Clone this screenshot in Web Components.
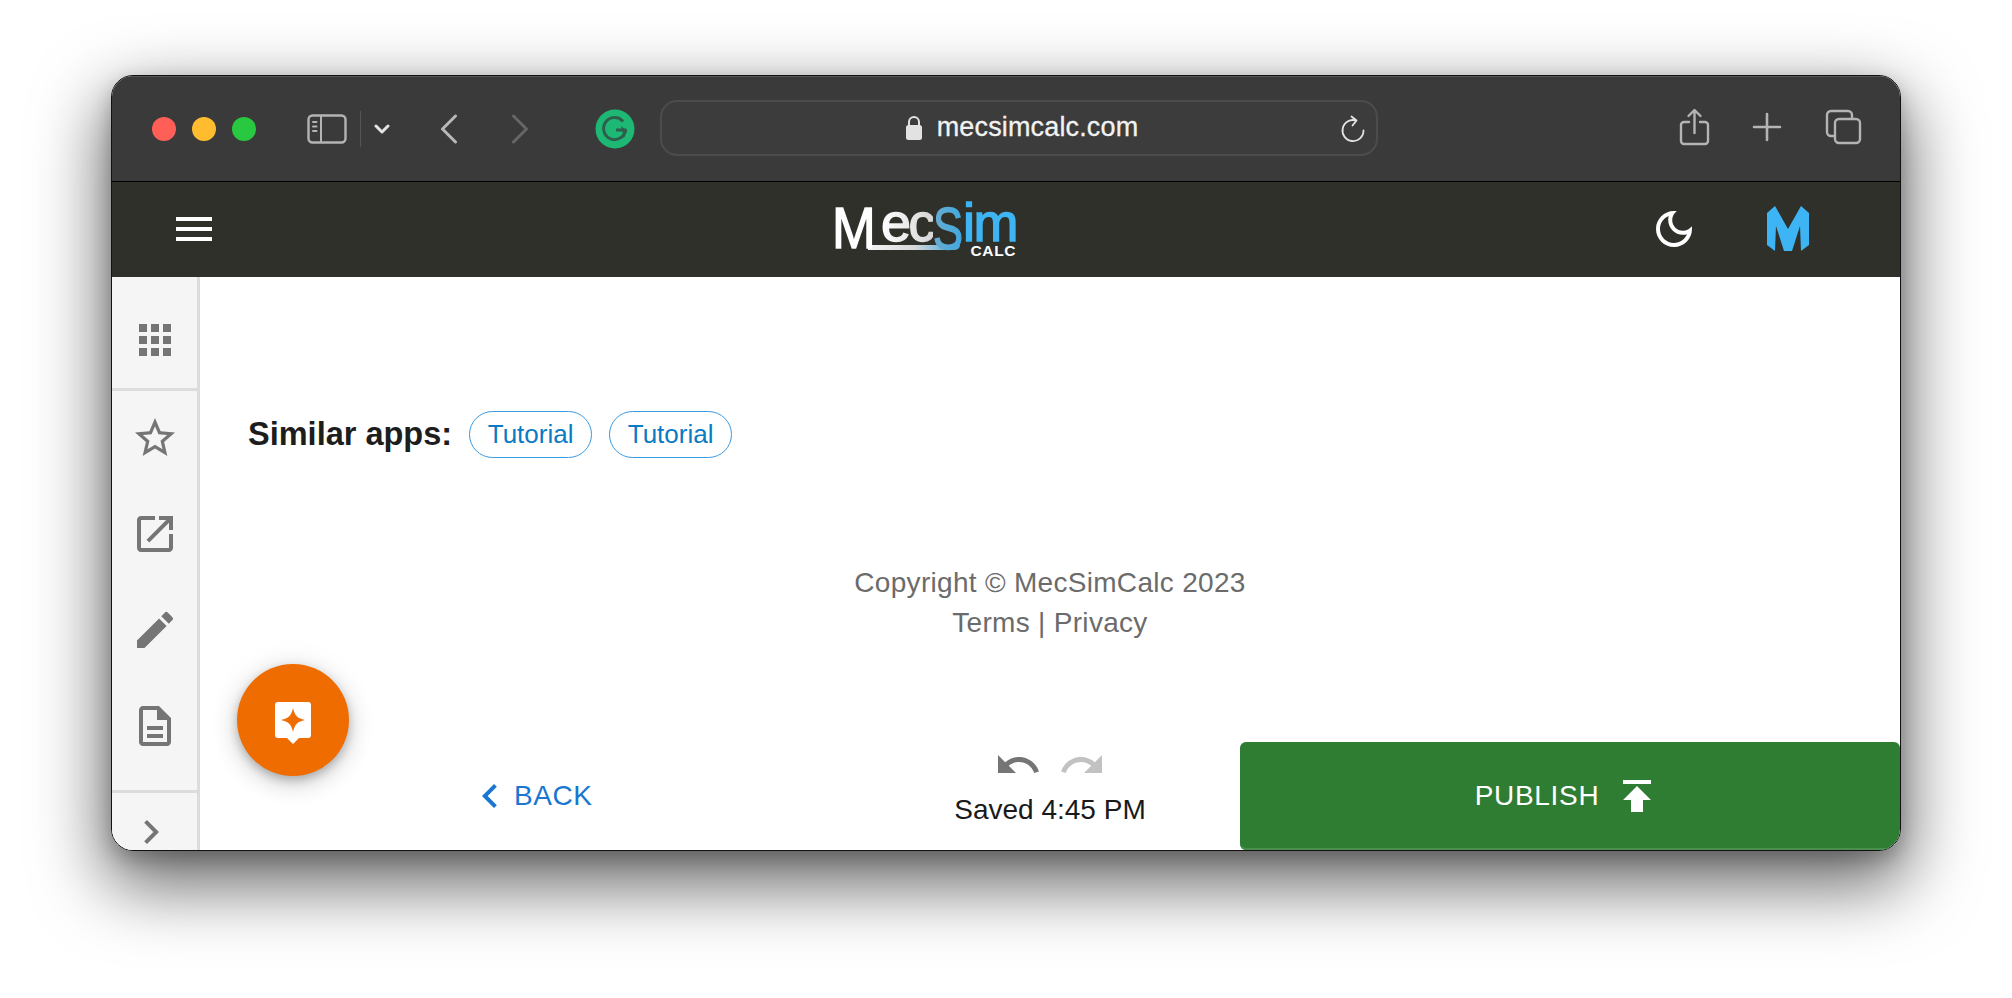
<!DOCTYPE html>
<html>
<head>
<meta charset="utf-8">
<title>MecSimCalc</title>
<style>
  html, body { margin: 0; height: 100%; background: #fff; }
  body { font-family: "Liberation Sans", Arial, sans-serif; overflow: hidden; }
</style>
</head>
<body>
<mac-window>
  <safari-toolbar slot="toolbar" url="mecsimcalc.com"></safari-toolbar>
  <app-navbar slot="navbar"></app-navbar>
  <app-sidebar slot="sidebar"></app-sidebar>
  <similar-apps>
    <app-chip>Tutorial</app-chip>
    <app-chip>Tutorial</app-chip>
  </similar-apps>
  <app-footer></app-footer>
  <editor-bar saved="Saved 4:45 PM"></editor-bar>
  <ai-fab slot="overlay"></ai-fab>
</mac-window>

<script>
const ICONS = {
  apps: 'M4 8h4V4H4v4zm6 12h4v-4h-4v4zm-6 0h4v-4H4v4zm0-6h4v-4H4v4zm6 0h4v-4h-4v4zm6-10v4h4V4h-4zm-6 4h4V4h-4v4zm6 6h4v-4h-4v4zm0 6h4v-4h-4v4z',
  star: 'M22 9.24l-7.19-.62L12 2 9.19 8.63 2 9.24l5.46 4.73L5.82 21 12 17.27 18.18 21l-1.63-7.03L22 9.24zM12 15.4l-3.76 2.27 1-4.28-3.32-2.88 4.38-.38L12 6.1l1.71 4.04 4.38.38-3.32 2.88 1 4.28L12 15.4z',
  open: 'M19 19H5V5h7V3H5c-1.11 0-2 .9-2 2v14c0 1.1.89 2 2 2h14c1.1 0 2-.9 2-2v-7h-2v7zM14 3v2h3.59l-9.83 9.83 1.41 1.41L19 6.41V10h2V3h-7z',
  edit: 'M3 17.25V21h3.75L17.81 9.94l-3.75-3.75L3 17.25zM20.71 7.04c.39-.39.39-1.02 0-1.41l-2.34-2.34a.9959.9959 0 0 0-1.41 0l-1.83 1.83 3.75 3.75 1.83-1.83z',
  doc: 'M8 16h8v2H8zm0-4h8v2H8zm6-10H6c-1.1 0-2 .9-2 2v16c0 1.1.89 2 1.99 2H18c1.1 0 2-.9 2-2V8l-6-6zm4 18H6V4h7v5h5v11z',
  right: 'M10 6L8.59 7.41 13.17 12l-4.58 4.59L10 18l6-6z',
  left: 'M15.41 7.41L14 6l-6 6 6 6 1.41-1.41L10.83 12z',
  undo: 'M12.5 8c-2.65 0-5.05.99-6.9 2.6L2 7v9h9l-3.62-3.62c1.39-1.16 3.16-1.88 5.12-1.88 3.54 0 6.55 2.31 7.6 5.5l2.37-.78C21.08 11.03 17.15 8 12.5 8z',
  redo: 'M18.4 10.6C16.55 8.99 14.15 8 11.5 8c-4.65 0-8.58 3.03-9.96 7.22L3.9 16c1.05-3.19 4.05-5.5 7.6-5.5 1.95 0 3.73.72 5.12 1.88L13 16h9V7l-3.6 3.6z',
  publish: 'M5 4v2h14V4H5zm0 10h4v6h6v-6h4l-7-7-7 7z',
  moon: 'M9.37 5.51C9.19 6.15 9.1 6.82 9.1 7.5c0 4.08 3.32 7.4 7.4 7.4.68 0 1.35-.09 1.99-.27C17.45 17.19 14.93 19 12 19c-3.86 0-7-3.14-7-7 0-2.93 1.81-5.45 4.37-6.49zM12 3c-4.97 0-9 4.03-9 9s4.03 9 9 9 9-4.03 9-9c0-.46-.04-.92-.1-1.36-.98 1.37-2.58 2.26-4.4 2.26-2.98 0-5.4-2.42-5.4-5.4 0-1.81.89-3.42 2.26-4.4C12.92 3.04 12.46 3 12 3z'
};

function icon(name, color) {
  return `<svg width="48" height="48" viewBox="0 0 24 24" fill="${color}" style="display:block;flex:none"><path d="${ICONS[name]}"/></svg>`;
}

class MacWindow extends HTMLElement {
  constructor() {
    super();
    this.attachShadow({ mode: 'open' });
    this.shadowRoot.innerHTML = `
      <style>
        :host { display: block; box-sizing: border-box; height: 998px; padding: 75px 111px 0; }
        .wrap { position: relative; width: 1790px; height: 776px; border-radius: 22px; box-shadow: 0 28px 70px 6px rgba(0,0,0,.6), 0 8px 20px rgba(0,0,0,.22); }
        .win {
          box-sizing: border-box;
          width: 1790px;
          height: 776px;
          display: flex;
          flex-direction: column;
          border: 1px solid #111;
          border-radius: 22px;
          overflow: hidden;
          background: #fff;
        }
        .main { flex: 1; min-height: 0; display: flex; }
        .content { flex: 1; min-width: 0; display: flex; flex-direction: column; }
      </style>
      <div class="wrap">
        <div class="win">
          <slot name="toolbar"></slot>
          <slot name="navbar"></slot>
          <div class="main">
            <slot name="sidebar"></slot>
            <div class="content"><slot></slot></div>
          </div>
        </div>
        <slot name="overlay"></slot>
      </div>`;
  }
}

class SafariToolbar extends HTMLElement {
  constructor() {
    super();
    this.attachShadow({ mode: 'open' });
  }

  connectedCallback() {
    const url = this.getAttribute('url') || '';
    this.shadowRoot.innerHTML = `
      <style>
        :host {
          display: flex;
          flex: none;
          box-sizing: border-box;
          height: 105px;
          align-items: center;
          padding: 0 38px 0 40px;
          background: #3a3a3a;
          box-shadow: inset 0 1px #565656;
        }
        svg { display: block; flex: none; fill: none; stroke: #b4b4b4; stroke-linecap: round; stroke-linejoin: round; }
        .lights { display: flex; gap: 16px; margin: 0 51px 0 0; }
        .lights i { width: 24px; height: 24px; border-radius: 50%; }
        .sep { width: 1px; height: 36px; background: #555; margin: 0 13px; }
        .url {
          box-sizing: border-box;
          width: 718px;
          height: 56px;
          margin: -2px 0 0 25px;
          padding-left: 5px;
          border: 2px solid #4c4c4c;
          border-radius: 17px;
          background: #3c3c3c;
          display: flex;
          align-items: center;
          justify-content: center;
          position: relative;
          color: #f2f2f2;
          font-size: 27px;
          letter-spacing: .15px;
          -webkit-text-stroke: .3px #f2f2f2;
          gap: 14px;
        }
        .reload { position: absolute; right: 10px; top: 13px; }
        .right { margin-left: auto; display: flex; align-items: center; margin-top: -4px; }
      </style>
      <div class="lights"><i style="background:#ff5f57"></i><i style="background:#febc2e"></i><i style="background:#28c840"></i></div>
      <svg width="40" height="30" viewBox="0 0 40 30" stroke-width="2.4">
        <rect x="1.5" y="1.5" width="37" height="27" rx="4"/>
        <path d="M14 2v26M6 8h3.500M6 12.500h3.500M6 17h3.500" stroke-width="2"/>
      </svg>
      <div class="sep"></div>
      <svg width="16" height="12" viewBox="0 0 16 12" stroke-width="3" style="stroke:#e4e4e4"><path d="M2 3l6 6 6-6"/></svg>
      <svg width="18" height="30" viewBox="0 0 18 30" stroke-width="3" style="margin-left:50px;stroke:#b8b8b8"><path d="M15.500 2L2.500 15l13 13"/></svg>
      <svg width="18" height="30" viewBox="0 0 18 30" stroke-width="3" style="margin-left:53px;stroke:#666"><path d="M2.500 2l13 13-13 13"/></svg>
      <svg width="40" height="40" viewBox="0 0 40 40" style="margin-left:66px;stroke:none">
        <circle cx="20" cy="20" r="19.500" fill="#1cb874"/>
        <path d="M28 12.500A11 11 0 1 0 30.500 21H21" fill="none" stroke="#2f5f4c" stroke-width="3" stroke-linecap="butt"/>
        <path d="M26 17l6 5-3 7z" fill="#2f5f4c"/>
      </svg>
      <div class="url">
        <svg width="18" height="26" viewBox="0 0 18 26" style="stroke:none">
          <path d="M4 11V7a5 5 0 0 1 10 0v4" fill="none" stroke="#e2e2e2" stroke-width="2"/>
          <rect x="1" y="10" width="16" height="15" rx="2.500" fill="#e2e2e2"/>
        </svg>
        <span>${url}</span>
        <svg class="reload" width="26" height="28" viewBox="0 0 26 28" stroke-width="1.800" style="stroke:#e4e4e4">
          <path d="M16 5.500A10.500 10.500 0 1 0 23.500 15.500"/>
          <path d="M11.500 1.500l5 4-4 5"/>
        </svg>
      </div>
      <div class="right">
        <svg width="32" height="38" viewBox="0 0 32 38" stroke-width="2.400">
          <path d="M10 14H5a3 3 0 0 0-3 3v16a3 3 0 0 0 3 3h21a3 3 0 0 0 3-3V17a3 3 0 0 0-3-3h-5M15.500 25V3M9.500 8l6-6 6 6"/>
        </svg>
        <svg width="30" height="30" viewBox="0 0 30 30" stroke-width="2.600" style="margin-left:41px"><path d="M15 2v26M2 15h26"/></svg>
        <svg width="37" height="36" viewBox="0 0 37 36" stroke-width="2.400" style="margin-left:43px">
          <path d="M9 27H6a4 4 0 0 1-4-4V6a4 4 0 0 1 4-4h17a4 4 0 0 1 4 4v3"/>
          <rect x="10" y="10" width="25" height="24" rx="4"/>
        </svg>
      </div>`;
  }
}

class AppNavbar extends HTMLElement {
  constructor() {
    super();
    this.attachShadow({ mode: 'open' });
    this.shadowRoot.innerHTML = `
      <style>
        :host {
          display: flex;
          flex: none;
          box-sizing: border-box;
          height: 96px;
          align-items: center;
          border-top: 1px solid #000;
          background: #30302b;
          padding: 0 91px 0 64px;
        }
        .burger { display: flex; flex-direction: column; gap: 6px; width: 36px; margin-top: -2px; }
        .burger i { height: 4px; background: #fff; }
        .logo { position: relative; margin-left: 623px; width: 184px; height: 56px; }
        /* the logo mixes sizes and baselines, so its letters sit on a small canvas */
        .logo span {
          position: absolute;
          line-height: 1.117;
          white-space: nowrap;
          transform-origin: 0 50%;
          -webkit-text-stroke: 1.5px transparent;
          -webkit-background-clip: text;
          background-clip: text;
          color: transparent;
        }
        .m1 { left: -3px; top: -5px; font-size: 57px; transform: scaleX(.92); background-color: #fff; }
        .ec { left: 46px; top: -10px; font-size: 54px; letter-spacing: -2.500px; background-image: linear-gradient(90deg, #fff, #d6d6d6); }
        .s1 { left: 98px; top: -7px; font-size: 60px; transform: scaleX(.75); background-image: linear-gradient(90deg, #6aaccf, #3fa9e2); }
        .im { left: 128px; top: -10px; font-size: 54px; letter-spacing: -1.500px; background-color: #3db5f5; }
        .swoosh {
          position: absolute;
          left: 33px;
          top: 43px;
          width: 92px;
          height: 5px;
          border-radius: 0 0 6px 0;
          background: linear-gradient(90deg, #f4f4f4 0, #d8d8d8 50%, #4fa9d8 92%);
        }
        .logo .calc {
          right: 3px;
          top: 42px;
          color: #fff;
          font-size: 15.500px;
          font-weight: 700;
          line-height: 14px;
          letter-spacing: .6px;
          -webkit-text-stroke: 0;
          background: none;
        }
        .right { margin-left: auto; display: flex; align-items: center; margin-top: -2px; }
        .m { display: block; margin-left: 69px; }
      </style>
      <div class="burger"><i></i><i></i><i></i></div>
      <div class="logo">
        <div class="swoosh"></div>
        <span class="m1">M</span><span class="ec">ec</span><span class="s1">S</span><span class="im">im</span>
        <span class="calc">CALC</span>
      </div>
      <div class="right">
        ${icon('moon', '#fff')}
        <svg class="m" width="42" height="45" viewBox="0 0 42 45"><path fill="#3db5f5" d="M0 7L8 0l13 23L34 0l8 7v32l-8 6-1-25-8 25h-8L9 20 8 45l-8-6z"/></svg>
      </div>`;
  }
}

class AppSidebar extends HTMLElement {
  constructor() {
    super();
    this.attachShadow({ mode: 'open' });
    this.shadowRoot.innerHTML = `
      <style>
        :host {
          display: flex;
          flex: none;
          flex-direction: column;
          box-sizing: border-box;
          width: 88px;
          border-right: 3px solid #dcdcdc;
          background: #f5f5f5;
          overflow: hidden;
        }
        section { flex: none; display: flex; flex-direction: column; align-items: center; box-sizing: border-box; border-bottom: 3px solid #dcdcdc; }
        .top { height: 114px; padding-top: 39px; }
        .mid { height: 402px; padding-top: 23px; gap: 48px; }
        .bottom { flex: none; display: flex; justify-content: center; padding: 15px 8px 0 0; }
      </style>
      <section class="top">${icon('apps', '#757575')}</section>
      <section class="mid">
        ${icon('star', '#757575')}
        ${icon('open', '#757575')}
        ${icon('edit', '#757575')}
        ${icon('doc', '#757575')}
      </section>
      <div class="bottom">${icon('right', '#757575')}</div>`;
  }
}

class SimilarApps extends HTMLElement {
  constructor() {
    super();
    this.attachShadow({ mode: 'open' });
    this.shadowRoot.innerHTML = `
      <style>
        :host { display: flex; align-items: center; gap: 17px; padding: 134px 0 0 48px; flex: none; }
        b { font-size: 32.500px; line-height: 47px; color: #1d1d1d; white-space: nowrap; }
      </style>
      <b>Similar apps:</b>
      <slot></slot>`;
  }
}

class AppChip extends HTMLElement {
  constructor() {
    super();
    this.attachShadow({ mode: 'open' });
    this.shadowRoot.innerHTML = `
      <style>
        :host {
          display: block;
          box-sizing: border-box;
          width: 123px;
          height: 47px;
          border: 1.500px solid #3b9ae0;
          border-radius: 24px;
          color: #0b7bc4;
          font-size: 26px;
          line-height: 44px;
          text-align: center;
        }
      </style>
      <slot></slot>`;
  }
}

class AppFooter extends HTMLElement {
  constructor() {
    super();
    this.attachShadow({ mode: 'open' });
    this.shadowRoot.innerHTML = `
      <style>
        :host {
          display: block;
          flex: none;
          margin-top: 105px;
          text-align: center;
          color: #6b6b6b;
          font-size: 28px;
          line-height: 40px;
          letter-spacing: .3px;
        }
      </style>
      <div>Copyright © MecSimCalc 2023</div>
      <div>Terms | Privacy</div>`;
  }
}

class EditorBar extends HTMLElement {
  constructor() {
    super();
    this.attachShadow({ mode: 'open' });
  }

  connectedCallback() {
    this.shadowRoot.innerHTML = `
      <style>
        :host {
          display: grid;
          grid-template-columns: 700px 300px 1fr;
          height: 108px;
          margin-top: auto;
          flex: none;
        }
        .back {
          display: flex;
          align-items: center;
          padding-left: 266px;
          color: #1976d2;
          font-size: 28px;
          letter-spacing: .6px;
        }
        .saved {
          display: flex;
          flex-direction: column;
          align-items: center;
          margin-top: -2px;
          color: #1a1a1a;
          font-size: 28px;
          line-height: 32px;
        }
        .history { display: flex; gap: 16px; height: 53px; margin-top: 1px; }
        .publish {
          margin-left: 40px;
          display: flex;
          align-items: center;
          justify-content: center;
          gap: 14px;
          padding-right: 4px;
          border-radius: 6px;
          background: #2e7d32;
          box-shadow: inset 0 -2px #4a8f4e;
          color: #fff;
          font-size: 28px;
          letter-spacing: .7px;
        }
      </style>
      <div class="back">${icon('left', '#1976d2')}<span>BACK</span></div>
      <div class="saved">
        <div class="history">${icon('undo', '#757575')}${icon('redo', '#c2c2c2')}</div>
        <span>${this.getAttribute('saved')}</span>
      </div>
      <div class="publish"><span>PUBLISH</span>${icon('publish', '#fff')}</div>`;
  }
}

class AiFab extends HTMLElement {
  constructor() {
    super();
    this.attachShadow({ mode: 'open' });
    this.shadowRoot.innerHTML = `
      <style>
        :host {
          position: absolute;
          left: 126px;
          top: 589px;
          width: 112px;
          height: 112px;
          border-radius: 50%;
          display: flex;
          align-items: center;
          justify-content: center;
          background: #ef6c00;
          box-shadow: 0 4px 10px rgba(0,0,0,.22), 0 8px 24px rgba(0,0,0,.14), 0 2px 32px rgba(0,0,0,.08);
        }
      </style>
      <svg width="36" height="42" viewBox="0 0 36 42" style="display:block;margin-top:6px">
        <path fill="#fff" d="M3 0h30a3 3 0 0 1 3 3v30a3 3 0 0 1-3 3h-9l-6 6-6-6H3a3 3 0 0 1-3-3V3a3 3 0 0 1 3-3z"/>
        <path fill="#ef6c00" d="M18 6c1.500 7.500 4.500 10.500 12 12-7.500 1.500-10.500 4.500-12 12-1.500-7.500-4.500-10.500-12-12 7.500-1.500 10.500-4.500 12-12z"/>
      </svg>`;
  }
}

customElements.define('mac-window', MacWindow);
customElements.define('safari-toolbar', SafariToolbar);
customElements.define('app-navbar', AppNavbar);
customElements.define('app-sidebar', AppSidebar);
customElements.define('similar-apps', SimilarApps);
customElements.define('app-chip', AppChip);
customElements.define('app-footer', AppFooter);
customElements.define('editor-bar', EditorBar);
customElements.define('ai-fab', AiFab);
</script>
</body>
</html>
